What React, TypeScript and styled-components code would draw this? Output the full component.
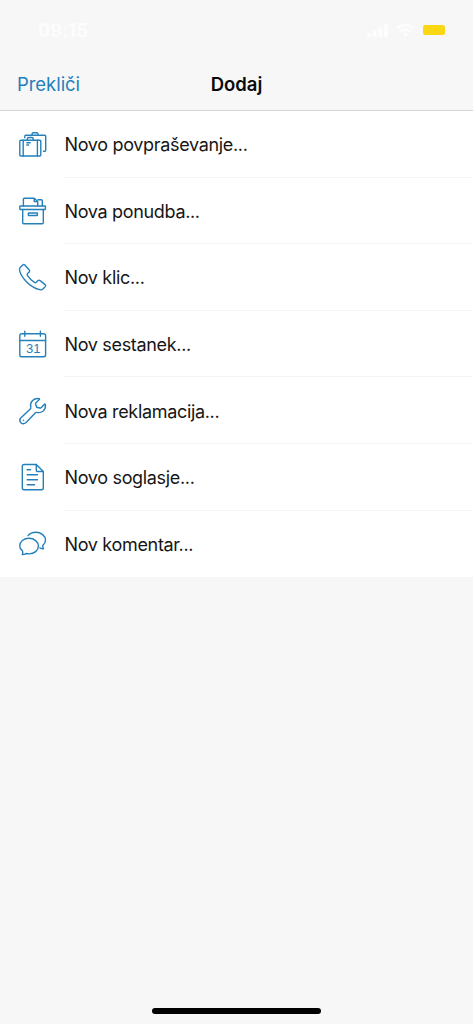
import React from "react";
import styled, { createGlobalStyle } from "styled-components";

const GlobalStyle = createGlobalStyle`
  * { box-sizing: border-box; }
  body { margin: 0; background: #f7f7f7; font-family: Inter, "Liberation Sans", sans-serif; }
`;

const Screen = styled.div`
  display: flex;
  flex-direction: column;
  height: 1024px;
  background: #f7f7f7;
`;

const StatusBar = styled.header`
  display: flex;
  align-items: center;
  justify-content: space-between;
  height: 58px;
  padding: 2px 28px 0 38px;
  color: #fdfdfd;
`;

const Clock = styled.span`
  font-size: 18.5px;
  font-weight: 600;
  letter-spacing: 0.1px;
`;

const StatusIcons = styled.div`
  display: flex;
  align-items: center;
  gap: 8px;
`;

const Battery = styled.span`
  width: 22px;
  height: 10px;
  border-radius: 2.5px;
  background: #fad613;
`;

const NavBar = styled.nav`
  display: grid;
  grid-template-columns: 1fr auto 1fr;
  align-items: center;
  height: 53px;
  padding: 0 17px;
  border-bottom: 1px solid #d5d5d5;
`;

const CancelButton = styled.button`
  justify-self: start;
  padding: 0;
  border: 0;
  background: none;
  color: #1f7fbd;
  font: inherit;
  font-size: 18.5px;
  letter-spacing: -0.05px;
`;

const Title = styled.h1`
  margin: 0;
  color: #0a0a0a;
  font-size: 18.5px;
  font-weight: 600;
  letter-spacing: 0;
`;

const Menu = styled.ul`
  margin: 0;
  padding: 0;
  list-style: none;
  background: #fff;
`;

const MenuItem = styled.li`
  display: flex;
  align-items: center;
  height: 66.6px;
  padding-left: 17px;
`;

const Icon = styled.svg`
  flex: none;
  width: 32px;
  height: 32px;
  margin: 2px 15px 0 0;
  fill: none;
  stroke: #2580ba;
  stroke-width: 1.4;
  stroke-linecap: round;
  stroke-linejoin: round;
`;

const Day = styled.text`
  fill: #2580ba;
  stroke: none;
  font-family: "Liberation Sans", sans-serif;
  font-size: 13px;
`;

const Label = styled.span<{ $last: boolean }>`
  display: flex;
  flex: 1;
  align-items: center;
  align-self: stretch;
  padding: 2px 0 0 0.5px;
  border-bottom: 1px solid ${(p) => (p.$last ? "transparent" : "#f4f4f4")};
  color: #161616;
  font-size: 18px;
  letter-spacing: -0.33px;
`;

const HomeArea = styled.footer`
  display: flex;
  justify-content: center;
  margin-top: auto;
  padding-bottom: 10px;
`;

const HomeIndicator = styled.div`
  width: 169px;
  height: 6px;
  border-radius: 3px;
  background: #000;
`;

const items = [
  {
    label: "Novo povpraševanje...",
    icon: (
      <>
        <rect x="2.8" y="11.3" width="21" height="15.7" rx="1" />
        <path d="M6.2 11.3V27M20.4 11.3V27M10.3 11.3V10q0-1.5 1.5-1.5h3q1.5 0 1.5 1.5v1.3M9.8 13.8h3.4M9.8 16h1.7" />
        <path d="M7.8 8.8V7.3q0-1 1-1h18.9q1 0 1 1v14q0 1-1 1h-1.2M15 6.3V5.2q0-1.4 1.4-1.4h3.2Q21 3.8 21 5.2v1.1" />
      </>
    ),
  },
  {
    label: "Nova ponudba...",
    icon: (
      <>
        <rect x="2.8" y="10" width="25.6" height="3.5" rx="0.6" />
        <path d="M5.7 13.5v13.3q0 1 1 1h18.6q1 0 1-1V13.5" />
        <rect x="11.4" y="17" width="9" height="2.5" rx="0.3" />
        <path d="M6.4 10V3.3q0-1 1-1h9.8l3.5 3.3V10M17.2 2.3v3.3h3.5M21 3.7h3.4q.9 0 .9.9V10" />
      </>
    ),
  },
  {
    label: "Nov klic...",
    icon: (
      <path d="M3.3 5.3 5.8 2.9q1-.9 2 .1l4.5 5q.9 1-.1 2l-1.6 1.5q-.8.8-.2 1.8 2.8 4.3 7.1 7.1 1 .6 1.8-.2l1.8-1.6q1-.9 2 0l5 4q1 .9.1 2l-2 2.2q-1.5 1.4-3.5.9-7.6-2.1-13.5-8.3Q4 14.1 2.6 8.6 2.2 6.4 3.3 5.3Z" />
    ),
  },
  {
    label: "Nov sestanek...",
    icon: (
      <>
        <rect x="2.8" y="4.8" width="25.8" height="22.9" rx="1.8" />
        <path d="M2.8 11.5h25.8M7.8 2.2v5M23.4 2.2v5" />
        <Day x="9" y="24.2">31</Day>
      </>
    ),
  },
  {
    label: "Nova reklamacija...",
    icon: (
      <>
        <path d="m3.5 22.3 10-9.6q.6-.6.3-1.5-1-3.8 1.6-6.5 2.7-2.7 6.7-2 .8.3.2.9l-3.5 3.3q-.5.5-.2 1.2l1.1 3.1 3.2.8q.7.2 1.2-.3l3.3-3.4q.8-.6 1 .3.6 3.9-2.2 6.4-2.9 2.3-6.3 1.4-.8-.2-1.4.4l-9.7 10q-2.6 2-4.9-.1-2.1-2.2-.4-4.4Z" />
        <circle cx="6.3" cy="24.4" r="0.4" strokeWidth="0.8" />
      </>
    ),
  },
  {
    label: "Novo soglasje...",
    icon: (
      <>
        <path d="M7.1 2.5h12.2l7 7v16.4q0 1.8-1.8 1.8H7.1q-1.8 0-1.8-1.8V4.3q0-1.8 1.8-1.8Z" />
        <path d="M19.3 2.5v6q0 1 1 1h6M10.2 7.8h3.3M10.2 12.8h10.3M10.2 17.8h10.3M10.2 22.8h7.4" />
      </>
    ),
  },
  {
    label: "Nov komentar...",
    icon: (
      <>
        <path d="M5.5 21.9Q2.7 19.8 2.7 16.9C2.7 12.8 6.8 9.3 12 9.3s9.4 3.5 9.4 7.8-4.1 7.8-9.4 7.8q-1.7 0-3-.4-1.4 1.1-3.5 1.1-.4-.2-.1-.5.8-1.5.1-3.2Z" />
        <path d="M11 6.6Q13.8 3.3 18.8 3.3c5.4 0 9.7 3.5 9.7 7.8q0 3.3-2.7 5.3-.3 1.6.6 2.9.4.7-.4.6-1.8-.1-3.1-1.2" />
      </>
    ),
  },
];

export default function App() {
  return (
    <>
      <GlobalStyle />
      <Screen>
        <StatusBar>
          <Clock>09:15</Clock>
          <StatusIcons>
            <svg width="21" height="15" viewBox="0 0 21 15" fill="currentColor">
              <rect x="0" y="10" width="4" height="4" rx="1" />
              <rect x="5.7" y="7.5" width="4" height="6.5" rx="1" />
              <rect x="11.3" y="4.5" width="4" height="9.5" rx="1" />
              <rect x="17" y="1" width="4" height="13" rx="1" />
            </svg>
            <svg width="19" height="15" viewBox="0 0 19 15" fill="none" stroke="currentColor" strokeWidth="2.6">
              <path d="M1 5.3q8.5-7 17 0M4.2 8.8q5.3-4.4 10.6 0" />
              <path d="m6.8 11.1 2.7 2.9 2.7-2.9q-2.7-2-5.4 0Z" fill="currentColor" stroke="none" />
            </svg>
            <Battery />
          </StatusIcons>
        </StatusBar>
        <NavBar>
          <CancelButton>Prekliči</CancelButton>
          <Title>Dodaj</Title>
        </NavBar>
        <Menu>
          {items.map((item, i) => (
            <MenuItem key={item.label}>
              <Icon viewBox="0 0 32 32">{item.icon}</Icon>
              <Label $last={i === items.length - 1}>{item.label}</Label>
            </MenuItem>
          ))}
        </Menu>
        <HomeArea>
          <HomeIndicator />
        </HomeArea>
      </Screen>
    </>
  );
}
